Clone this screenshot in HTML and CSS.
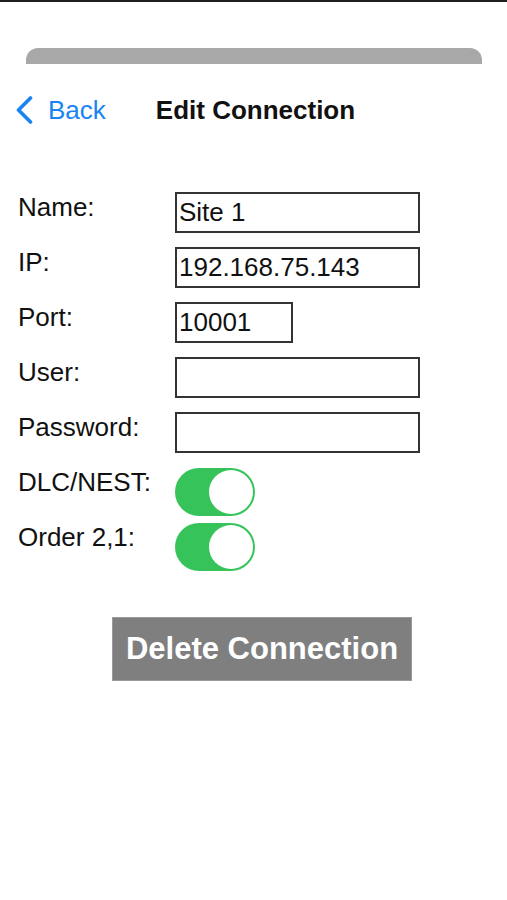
FILE: index.html
```html
<!DOCTYPE html>
<html lang="en">
<head>
<meta charset="utf-8">
<title>Edit Connection</title>
<link rel="stylesheet" href="styles.css">
</head>
<body>
<div class="screen">
  <div class="sheet-handle"></div>
  <nav class="navbar">
    <a class="back" href="#">
      <svg class="chevron" width="18" height="28" viewBox="0 0 18 28" aria-hidden="true">
        <path d="M15.5 2 L3.5 14 L15.5 26" fill="none" stroke="#1a84f2" stroke-width="3.6" stroke-linecap="round" stroke-linejoin="round"/>
      </svg>
      <span>Back</span>
    </a>
    <h1 class="title">Edit Connection</h1>
  </nav>
  <form class="form">
    <div class="row"><label class="label">Name:</label><input class="field" type="text" value="Site 1"></div>
    <div class="row"><label class="label">IP:</label><input class="field" type="text" value="192.168.75.143"></div>
    <div class="row"><label class="label">Port:</label><input class="field field-short" type="text" value="10001"></div>
    <div class="row"><label class="label">User:</label><input class="field" type="text" value=""></div>
    <div class="row"><label class="label">Password:</label><input class="field" type="password" value=""></div>
    <div class="row"><label class="label">DLC/NEST:</label><span class="toggle"><span class="knob"></span></span></div>
    <div class="row"><label class="label">Order 2,1:</label><span class="toggle"><span class="knob"></span></span></div>
  </form>
  <button class="delete" type="button">Delete Connection</button>
</div>
</body>
</html>
```

FILE: styles.css
```css
* { box-sizing: border-box; }
html, body { margin: 0; padding: 0; background: #fff; }
body {
  font-family: "Liberation Sans", Arial, sans-serif;
  color: #111;
}
.screen {
  border-top: 2px solid #1e1e1e;
  min-height: 900px;
  display: flex;
  flex-direction: column;
}
.sheet-handle {
  margin: 46px 25px 0 26px;
  height: 16px;
  background: #a8a8a8;
  border-radius: 12px 12px 0 0;
}
.navbar {
  display: flex;
  align-items: center;
  height: 30px;
  margin-top: 31px;
  padding-left: 15px;
}
.back {
  display: flex;
  align-items: center;
  gap: 15px;
  color: #1a84f2;
  text-decoration: none;
  font-size: 26px;
  line-height: 30px;
}
.chevron { display: block; }
.title {
  margin: 0 0 0 50px;
  font-size: 26px;
  line-height: 30px;
  font-weight: bold;
  color: #111;
}
.form {
  margin-top: 67px;
  padding-left: 18px;
  display: flex;
  flex-direction: column;
}
.row {
  display: flex;
  align-items: flex-start;
  height: 55px;
}
.label {
  width: 157px;
  font-size: 26px;
  line-height: 30px;
  color: #111;
}
.field {
  width: 245px;
  height: 41px;
  border: 2px solid #333;
  border-radius: 0;
  padding: 0 2px;
  margin: 0;
  font-family: "Liberation Sans", Arial, sans-serif;
  font-size: 26px;
  color: #111;
  background: #fff;
  outline: none;
}
.field-short { width: 118px; }
.toggle {
  position: relative;
  display: block;
  width: 80px;
  height: 48px;
  margin-top: 1px;
  border-radius: 24px;
  background: #36c45a;
}
.knob {
  position: absolute;
  top: 2px;
  right: 2px;
  width: 44px;
  height: 44px;
  border-radius: 50%;
  background: #fff;
}
.delete {
  align-self: flex-start;
  margin: 40px 0 0 112px;
  width: 300px;
  height: 64px;
  border: 1px solid #9a9a9a;
  background: #7f7f7f;
  color: #fff;
  font-family: "Liberation Sans", Arial, sans-serif;
  font-weight: bold;
  font-size: 31px;
  padding: 0;
}
```
